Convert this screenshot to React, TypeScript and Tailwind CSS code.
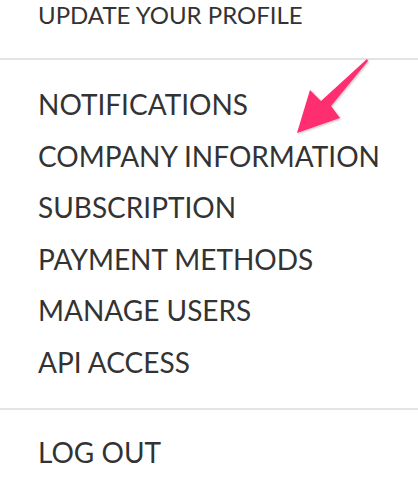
const items = [
  "NOTIFICATIONS",
  "COMPANY INFORMATION",
  "SUBSCRIPTION",
  "PAYMENT METHODS",
  "MANAGE USERS",
  "API ACCESS",
]

function Arrow() {
  return (
    <svg
      className="absolute left-[290px] top-[54px] pointer-events-none"
      width="84"
      height="86"
      viewBox="0 0 84 86"
    >
      <defs>
        <filter id="sh" x="-20%" y="-20%" width="140%" height="140%">
          <feDropShadow dx="1" dy="1" stdDeviation="1" floodColor="#000" floodOpacity="0.25" />
        </filter>
      </defs>
      <path
        d="M77 5 L78 7 L41 52 L50 64 L7 79 L20 36 L31 47 Z"
        fill="#ff2d6f"
        filter="url(#sh)"
      />
    </svg>
  )
}

export default function App() {
  return (
    <div className="relative w-[418px] h-[484px] bg-white overflow-hidden text-[#333333] font-['Lato','Open_Sans',sans-serif]">
      <Arrow />
      <div className="px-[38px]">
        <div className="text-[24px] leading-[30px] mb-[28px]">UPDATE YOUR PROFILE</div>
      </div>
      <div className="h-[2px] bg-[#e4e4e4]" />
      <ul className="px-[38px] pt-[19px] pb-[19px]">
        {items.map((item) => (
          <li key={item} className="text-[28px] leading-[51.6px]">
            {item}
          </li>
        ))}
      </ul>
      <div className="h-[2px] bg-[#e4e4e4]" />
      <div className="px-[38px] pt-[17px]">
        <div className="text-[28px] leading-[51.6px]">LOG OUT</div>
      </div>
    </div>
  )
}
